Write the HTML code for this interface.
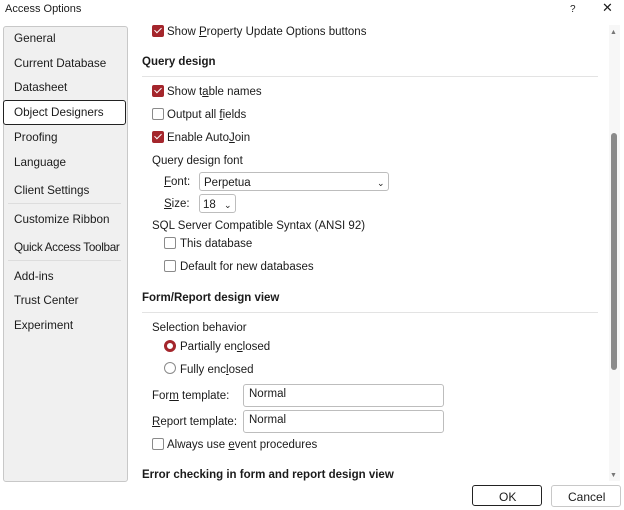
<!DOCTYPE html>
<html><head><style>
body{margin:0;width:624px;height:510px;background:#fff;position:relative;overflow:hidden;font-family:"Liberation Sans",sans-serif;font-size:11.5px;color:#1b1b1b}
.a{position:absolute;white-space:nowrap;line-height:14px;margin-top:1px}
.b{font-weight:bold}
.cb{position:absolute;width:10px;height:10px;border:1px solid #8a8a8a;border-radius:2px;background:#fff}
.cb.on{background:#a4262c;border-color:#a4262c}
.cb.on:after{content:"";position:absolute;left:3px;top:0px;width:3px;height:6px;border:solid #fff;border-width:0 1.5px 1.5px 0;transform:rotate(45deg)}
.hr{position:absolute;height:1px;background:#e3e3e3}
.box{position:absolute;border:1px solid #bdbdbd;border-radius:3px;background:#fff;box-sizing:border-box}
.nav{position:absolute;left:14px;font-size:11.7px}
</style></head><body>
<div class="a" style="left:5px;top:1px;font-size:11px">Access Options</div>
<div class="a" style="left:570px;top:2px;font-size:10px">?</div>
<div class="a" style="left:602px;top:0px;font-size:13px">✕</div>

<div style="position:absolute;left:3px;top:26px;width:123px;height:454px;background:#f0f0f0;border:1px solid #c8c8c8;border-radius:3px"></div>
<div style="position:absolute;left:3px;top:100px;width:121px;height:23px;border:1.5px solid #222;border-radius:3px;background:#fff"></div>
<div class="a nav" style="top:31px">General</div>
<div class="a nav" style="top:56px">Current Database</div>
<div class="a nav" style="top:80px">Datasheet</div>
<div class="a nav" style="top:105px">Object Designers</div>
<div class="a nav" style="top:130px">Proofing</div>
<div class="a nav" style="top:155px">Language</div>
<div class="a nav" style="top:183px">Client Settings</div>
<div class="hr" style="left:8px;top:203px;width:113px;background:#ddd"></div>
<div class="a nav" style="top:212px">Customize Ribbon</div>
<div class="a nav" style="top:240px;letter-spacing:-0.3px">Quick Access Toolbar</div>
<div class="hr" style="left:8px;top:260px;width:113px;background:#ddd"></div>
<div class="a nav" style="top:269px">Add-ins</div>
<div class="a nav" style="top:293px">Trust Center</div>
<div class="a nav" style="top:318px">Experiment</div>

<div class="cb on" style="left:152px;top:25px"></div><div class="a" style="left:167px;top:24px">Show <u>P</u>roperty Update Options buttons</div>
<div class="a b" style="left:142px;top:54px">Query design</div>
<div class="hr" style="left:142px;top:76px;width:456px"></div>
<div class="cb on" style="left:152px;top:85px"></div><div class="a" style="left:167px;top:84px">Show t<u>a</u>ble names</div>
<div class="cb" style="left:152px;top:108px"></div><div class="a" style="left:167px;top:107px">Output all <u>f</u>ields</div>
<div class="cb on" style="left:152px;top:131px"></div><div class="a" style="left:167px;top:130px">Enable Auto<u>J</u>oin</div>
<div class="a" style="left:152px;top:153px">Query design font</div>
<div class="a" style="left:164px;top:174px"><u>F</u>ont:</div>
<div class="box" style="left:199px;top:172px;width:190px;height:19px"></div>
<div class="a" style="left:204px;top:175px">Perpetua</div>
<div class="a" style="left:377px;top:175px;font-size:9px">⌄</div>
<div class="a" style="left:164px;top:196px"><u>S</u>ize:</div>
<div class="box" style="left:199px;top:194px;width:37px;height:19px"></div>
<div class="a" style="left:203px;top:197px">18</div>
<div class="a" style="left:224px;top:197px;font-size:9px">⌄</div>
<div class="a" style="left:152px;top:218px">SQL Server Compatible Syntax (ANSI 92)</div>
<div class="cb" style="left:164px;top:237px"></div><div class="a" style="left:180px;top:236px">This database</div>
<div class="cb" style="left:164px;top:260px"></div><div class="a" style="left:180px;top:259px">Default for new databases</div>
<div class="a b" style="left:142px;top:290px">Form/Report design view</div>
<div class="hr" style="left:142px;top:312px;width:456px"></div>
<div class="a" style="left:152px;top:320px">Selection behavior</div>
<div style="position:absolute;left:164px;top:340px;width:6px;height:6px;border:3px solid #a4262c;border-radius:50%"></div>
<div class="a" style="left:180px;top:339px">Partially en<u>c</u>losed</div>
<div style="position:absolute;left:164px;top:362px;width:10px;height:10px;border:1px solid #8a8a8a;border-radius:50%"></div>
<div class="a" style="left:180px;top:362px">Fully enc<u>l</u>osed</div>
<div class="a" style="left:152px;top:388px">For<u>m</u> template:</div>
<div class="box" style="left:243px;top:384px;width:201px;height:23px"></div>
<div class="a" style="left:249px;top:386px">Normal</div>
<div class="a" style="left:152px;top:414px"><u>R</u>eport template:</div>
<div class="box" style="left:243px;top:410px;width:201px;height:23px"></div>
<div class="a" style="left:249px;top:412px">Normal</div>
<div class="cb" style="left:152px;top:438px"></div><div class="a" style="left:167px;top:437px">Always use <u>e</u>vent procedures</div>
<div class="a b" style="left:142px;top:467px">Error checking in form and report design view</div>

<div style="position:absolute;left:609px;top:25px;width:11px;height:456px;background:#f7f7f7"></div>
<div style="position:absolute;left:611px;top:133px;width:6px;height:237px;background:#8a8a8a;border-radius:3px"></div>
<div class="a" style="left:610px;top:25px;font-size:7px;color:#777">▲</div>
<div class="a" style="left:610px;top:468px;font-size:7px;color:#777">▼</div>

<div style="position:absolute;left:472px;top:485px;width:68px;height:19px;border:1.5px solid #222;border-radius:3px"></div>
<div class="a" style="left:499px;top:489px;font-size:12px">OK</div>
<div style="position:absolute;left:551px;top:485px;width:68px;height:20px;border:1px solid #c8c8c8;border-radius:3px"></div>
<div class="a" style="left:568px;top:489px;font-size:12px">Cancel</div>
</body></html>
